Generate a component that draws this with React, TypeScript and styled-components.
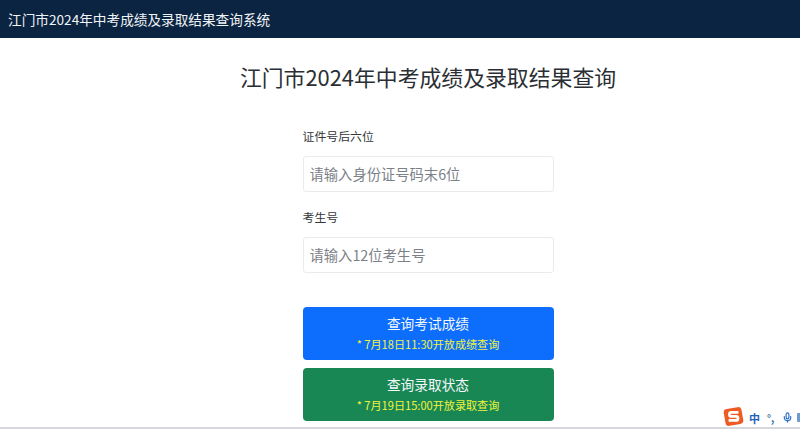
import React from "react";
import styled, { createGlobalStyle } from "styled-components";
import { Mic } from "lucide-react";

const Global = createGlobalStyle`
  html, body { margin: 0; padding: 0; background: #fff; }
  body { font-family: "Noto Sans CJK SC", "Noto Sans", sans-serif; overflow: hidden; }
`;

const Page = styled.div`
  position: relative;
  width: 800px;
  height: 429px;
  display: flex;
  flex-direction: column;
  overflow: hidden;
`;

const NavBar = styled.header`
  flex: none;
  height: 38px;
  background: #0b2441;
  display: flex;
  align-items: center;
  padding-left: 8px;
`;

const Brand = styled.span`
  color: #f1f4f7;
  font-size: 13.65px;
  line-height: 20px;
`;

const Main = styled.main`
  flex: 1;
  display: flex;
  flex-direction: column;
  align-items: center;
  padding: 23px 0 0 56px;
`;

const Title = styled.h1`
  margin: 0 0 34px;
  font-size: 21.85px;
  line-height: 32px;
  font-weight: 400;
  color: #2b2f33;
  white-space: nowrap;
`;

const Form = styled.form`
  width: 251px;
  display: flex;
  flex-direction: column;
`;

const Field = styled.div`
  display: flex;
  flex-direction: column;
  gap: 11px;
  margin-bottom: 16px;
`;

const Label = styled.label`
  font-size: 11.9px;
  line-height: 18px;
  color: #33373b;
`;

const Input = styled.input`
  box-sizing: border-box;
  width: 100%;
  height: 36px;
  padding: 0 6px 2px;
  border: 1px solid #e9ebed;
  border-radius: 3px;
  background: #fff;
  font: 14.3px "Noto Sans CJK SC", sans-serif;
  outline: none;
  &::placeholder { color: #7b8187; opacity: 1; }
`;

const Buttons = styled.div`
  display: flex;
  flex-direction: column;
  gap: 8px;
  margin-top: 18px;
`;

const QueryButton = styled.button<{ $tone: string }>`
  height: 53px;
  padding: 0 0 3px;
  border: 0;
  border-radius: 4px;
  background: ${(p) => p.$tone};
  display: flex;
  flex-direction: column;
  align-items: center;
  justify-content: center;
  gap: 2px;
  font-family: inherit;
`;

const ButtonTitle = styled.span`
  color: #f4f8fb;
  font-size: 13.7px;
  line-height: 21px;
`;

const ButtonNote = styled.span`
  color: #f2f43c;
  font-size: 11.1px;
  line-height: 16px;
`;

const BottomEdge = styled.div`
  position: absolute;
  left: 0;
  right: 0;
  bottom: 0;
  height: 2px;
  background: #d6d8db;
`;

const ImeBar = styled.div`
  position: absolute;
  left: 723px;
  bottom: 2px;
  width: 77px;
  height: 22px;
  display: flex;
  align-items: center;
  gap: 4px;
`;

const ImeLogo = styled.svg`
  flex: none;
`;

const ImeText = styled.span`
  color: #1f63b8;
  font-size: 11px;
  font-weight: 700;
  line-height: 12px;
  margin: 3px 0 0 1px;
`;

const ImeDots = styled.span`
  color: #3d6f9e;
  font-size: 10px;
  font-weight: 700;
  line-height: 12px;
  margin: 3px 0 0 3px;
`;

const ImeMic = styled(Mic)`
  flex: none;
  color: #2a6fc4;
  margin: 3px 0 0 4px;
`;

const ImeEnd = styled.span`
  flex: none;
  width: 3px;
  height: 9px;
  margin-top: 3px;
  background: #6f9ccc;
  border-radius: 1px 0 0 1px;
`;

export default function App() {
  return (
    <Page>
      <Global />
      <NavBar>
        <Brand>江门市2024年中考成绩及录取结果查询系统</Brand>
      </NavBar>
      <Main>
        <Title>江门市2024年中考成绩及录取结果查询</Title>
        <Form>
          <Field>
            <Label>证件号后六位</Label>
            <Input placeholder="请输入身份证号码末6位" />
          </Field>
          <Field>
            <Label>考生号</Label>
            <Input placeholder="请输入12位考生号" />
          </Field>
          <Buttons>
            <QueryButton type="button" $tone="#0d6efd">
              <ButtonTitle>查询考试成绩</ButtonTitle>
              <ButtonNote>* 7月18日11:30开放成绩查询</ButtonNote>
            </QueryButton>
            <QueryButton type="button" $tone="#198754">
              <ButtonTitle>查询录取状态</ButtonTitle>
              <ButtonNote>* 7月19日15:00开放录取查询</ButtonNote>
            </QueryButton>
          </Buttons>
        </Form>
      </Main>
      <BottomEdge />
      <ImeBar>
        <ImeLogo width="21" height="21" viewBox="0 0 21 21">
          <rect x="1.5" y="2" width="18" height="17" rx="3.5" fill="#ee5a24" transform="rotate(-10 10.5 10.5)" />
          <path d="M15.5 6.4H8.4a2 2 0 0 0 0 4h4.6a2 2 0 0 1 0 4H5.6" fill="none" stroke="#fff" strokeWidth="2.8" />
        </ImeLogo>
        <ImeText>中</ImeText>
        <ImeDots>°,</ImeDots>
        <ImeMic size={11} strokeWidth={2.6} />
        <ImeEnd />
      </ImeBar>
    </Page>
  );
}
